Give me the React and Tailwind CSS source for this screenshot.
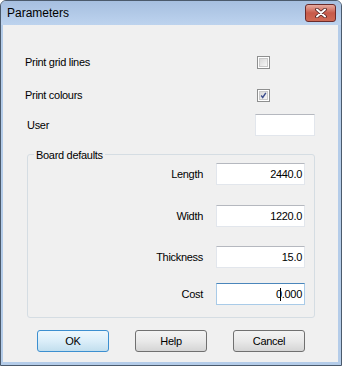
import React from 'react'

const font = { fontFamily: '"Liberation Sans", Arial, sans-serif' }

function Checkbox({ checked }) {
  return (
    <div className="w-[13px] h-[13px] border border-[#8e8f8f] bg-white p-[1px]">
      <div className="w-full h-full bg-gradient-to-br from-[#d9d9d9] to-[#f7f7f7] border border-[#c9c9c9] flex items-center justify-center">
        {checked && (
          <svg width="9" height="9" viewBox="0 0 9 9">
            <path d="M1.5 4.5 L3.5 7 L7.5 1" fill="none" stroke="#3e4f8e" strokeWidth="1.8" />
          </svg>
        )}
      </div>
    </div>
  )
}

function Field({ value, focused, caret, w = 'w-[89px]' }) {
  return (
    <div
      className={`${w} h-[22px] bg-white border flex items-center justify-end pr-[2px] text-[11px] tracking-[-0.3px] text-black ${
        focused ? 'border-[#a9cbe8] border-t-[#4a86bb]' : 'border-[#e2e6ec] border-t-[#b5b8bf]'
      }`}
    >
      {caret && <span className="w-px h-[13px] bg-black -mr-[5px]"></span>}
      {value}
    </div>
  )
}

function Button({ children, primary }) {
  return (
    <div
      className={`w-[72px] h-[22px] rounded-[3px] border flex items-center justify-center text-[11px] text-black ${
        primary
          ? 'border-[#3c8fd0] bg-gradient-to-b from-[#eef7fc] via-[#dbeef9] to-[#c2dfee]'
          : 'border-[#707070] bg-gradient-to-b from-[#f3f3f3] via-[#e9e9e9] to-[#d5d5d5]'
      }`}
    >
      {children}
    </div>
  )
}

export default function App() {
  const rows = [
    { label: 'Length', value: '2440.0', mt: 'mt-[8px]' },
    { label: 'Width', value: '1220.0', mt: 'mt-[20px]' },
    { label: 'Thickness', value: '15.0', mt: 'mt-[19px]' },
    { label: 'Cost', value: '0.000', mt: 'mt-[15px]', focused: true },
  ]

  return (
    <div className="w-[342px] h-[366px] bg-white" style={font}>
      <div className="w-full h-full rounded-t-[6px] border border-[#4b5a6c] bg-[#b4cce9] flex flex-col overflow-hidden">
        {/* Title bar */}
        <div className="h-[24px] shrink-0 flex items-center justify-between pl-[6px] pr-[5px] bg-gradient-to-b from-[#a6bfe0] to-[#bdd3ee]">
          <span className="text-[12px] text-black">Parameters</span>
          <div className="w-[31px] h-[18px] rounded-[3px] border border-[#6a2b2b] bg-gradient-to-b from-[#e6aba1] via-[#c75a4a] to-[#cf6a55] flex items-center justify-center">
            <svg width="14" height="10" viewBox="0 0 14 10">
              <path d="M3 1.5 L11 8.5 M11 1.5 L3 8.5" stroke="#4a1d1d" strokeWidth="3.6" strokeLinecap="round" />
              <path d="M3 1.5 L11 8.5 M11 1.5 L3 8.5" stroke="#ffffff" strokeWidth="2" strokeLinecap="round" />
            </svg>
          </div>
        </div>

        {/* Client area */}
        <div className="flex-1 ml-[2px] mr-[3px] mb-[3px] bg-[#f0f0f0] flex flex-col text-[11px] tracking-[-0.3px] text-black">
          <div className="mt-[31px] flex items-center pl-[22px] h-[13px]">
            <span className="w-[232px]">Print grid lines</span>
            <Checkbox />
          </div>
          <div className="mt-[20px] flex items-center pl-[22px] h-[13px]">
            <span className="w-[232px]">Print colours</span>
            <Checkbox checked />
          </div>
          <div className="mt-[12px] flex items-center pl-[24px]">
            <span className="w-[228px]">User</span>
            <Field value="" w="w-[60px]" />
          </div>

          {/* Board defaults group */}
          <div className="relative mt-[18px] ml-[24px] w-[288px] h-[164px] border border-[#d5dde3] rounded-[3px] flex flex-col">
            <span className="absolute -top-[8px] left-[6px] px-[2px] bg-[#f0f0f0]">Board defaults</span>
            {rows.map((r) => (
              <div key={r.label} className={`${r.mt} flex items-center`}>
                <span className="w-[176px] text-right pr-[1px]">{r.label}</span>
                <div className="ml-[12px]">
                  <Field value={r.value} focused={r.focused} caret={r.focused} />
                </div>
              </div>
            ))}
          </div>

          {/* Buttons */}
          <div className="mt-[12px] flex pl-[34px] gap-[26px]">
            <Button primary>OK</Button>
            <Button>Help</Button>
            <Button>Cancel</Button>
          </div>
        </div>
      </div>
    </div>
  )
}
